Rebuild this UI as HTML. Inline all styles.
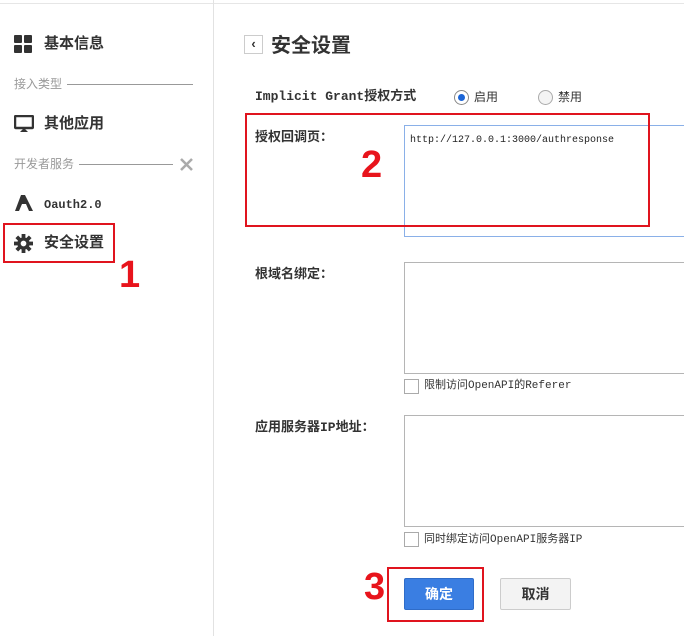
<!DOCTYPE html>
<html><head><meta charset="utf-8"><style>
*{margin:0;padding:0;box-sizing:border-box}
body{width:684px;height:636px;background:#fff;position:relative;overflow:hidden;font-family:"Liberation Sans","Noto Sans CJK SC",sans-serif;color:#333}
.a{position:absolute;white-space:nowrap}
.nav{font-size:15px;font-weight:bold;color:#333;line-height:20px}
.grp{font-size:12px;color:#999;line-height:16px}
.hl{position:absolute;height:1px;background:#999}
.lab{font-size:13px;font-weight:bold;color:#333;line-height:16px;font-family:"Liberation Mono","Noto Sans CJK SC",monospace}
.ta{position:absolute;left:404px;width:290px;height:112px;border:1px solid #b5b5b5}
.cb{position:absolute;left:404px;width:15px;height:15px;border:1px solid #aaa;background:#fff}
.ct{font-size:11px;color:#333;line-height:14px;font-family:"Liberation Mono","Noto Sans CJK SC",monospace}
.red{position:absolute;border:2px solid #e0141e}
.num{position:absolute;color:#e8141c;font-weight:bold;font-size:38px;line-height:38px;font-family:"Liberation Sans",sans-serif}
</style></head><body>
<div class="a" style="left:0;top:3px;width:684px;height:1px;background:#e6e6e6"></div>
<div class="a" style="left:213px;top:0;width:1px;height:636px;background:#e2e2e2"></div>

<svg class="a" style="left:14px;top:35px" width="18" height="18"><rect x="0" y="0" width="8" height="8" rx="1" fill="#333"/><rect x="10" y="0" width="8" height="8" rx="1" fill="#333"/><rect x="0" y="10" width="8" height="8" rx="1" fill="#333"/><rect x="10" y="10" width="8" height="8" rx="1" fill="#333"/></svg>
<div class="a nav" style="left:44px;top:34px">基本信息</div>
<div class="a grp" style="left:14px;top:76px">接入类型</div>
<div class="hl" style="left:67px;top:84px;width:126px"></div>
<svg class="a" style="left:14px;top:115px" width="20" height="18"><rect x="1" y="1" width="18" height="12" rx="1" fill="none" stroke="#333" stroke-width="2.5"/><path d="M6 17 L10 13 L14 17Z" fill="#333"/></svg>
<div class="a nav" style="left:44px;top:114px">其他应用</div>
<div class="a grp" style="left:14px;top:156px">开发者服务</div>
<div class="hl" style="left:79px;top:164px;width:94px"></div>
<svg class="a" style="left:179px;top:157px" width="15" height="15"><path d="M2 2 L13 13 M13 2 L2 13" stroke="#aaa" stroke-width="2.5"/></svg>
<svg class="a" style="left:14px;top:194px" width="20" height="18"><path d="M1 17 L7 1 H11 L19 17 H15 L12 10 H8 L5 17Z" fill="#333"/><rect x="7" y="8" width="6" height="2" fill="#333"/></svg>
<div class="a nav" style="left:44px;top:195px;font-size:12px;font-family:'Liberation Mono',monospace">Oauth2.0</div>
<svg class="a" style="left:14px;top:234px" width="19" height="19" viewBox="0 0 20 20"><g fill="#333"><circle cx="10" cy="10" r="6.5"/><rect x="8" y="0" width="4" height="20"/><rect x="0" y="8" width="20" height="4"/><rect x="8" y="0" width="4" height="20" transform="rotate(45 10 10)"/><rect x="8" y="0" width="4" height="20" transform="rotate(-45 10 10)"/></g><circle cx="10" cy="10" r="3" fill="#fff"/></svg>
<div class="a nav" style="left:44px;top:233px">安全设置</div>
<div class="red" style="left:3px;top:223px;width:112px;height:40px"></div>
<div class="num" style="left:119px;top:256px">1</div>

<div class="a" style="left:244px;top:35px;width:19px;height:19px;border:1px solid #ccc;font-size:13px;line-height:16px;text-align:center;font-weight:bold">‹</div>
<div class="a" style="left:271px;top:33px;font-size:20px;font-weight:bold;line-height:26px;color:#333">安全设置</div>

<div class="a lab" style="left:255px;top:89px">Implicit Grant授权方式</div>
<div class="a" style="left:454px;top:90px;width:15px;height:15px;border-radius:50%;border:1px solid #888;background:#fff"><div style="position:absolute;left:3px;top:3px;width:7px;height:7px;border-radius:50%;background:#1a64d6"></div></div>
<div class="a" style="left:474px;top:89px;font-size:12px;line-height:16px">启用</div>
<div class="a" style="left:538px;top:90px;width:15px;height:15px;border-radius:50%;border:1px solid #aaa;background:#f4f4f4"></div>
<div class="a" style="left:558px;top:89px;font-size:12px;line-height:16px">禁用</div>

<div class="a lab" style="left:255px;top:130px">授权回调页：</div>
<div class="ta" style="top:125px;border-color:#8ab0e8"></div>
<div class="a" style="left:410px;top:134px;font-size:10px;line-height:14px;font-family:'Liberation Mono',monospace;color:#222">http://127.0.0.1:3000/authresponse</div>
<div class="red" style="left:245px;top:113px;width:405px;height:114px"></div>
<div class="num" style="left:361px;top:146px">2</div>

<div class="a lab" style="left:255px;top:267px">根域名绑定：</div>
<div class="ta" style="top:262px"></div>
<div class="cb" style="top:379px"></div>
<div class="a ct" style="left:424px;top:379px">限制访问OpenAPI的Referer</div>

<div class="a lab" style="left:255px;top:420px">应用服务器IP地址：</div>
<div class="ta" style="top:415px"></div>
<div class="cb" style="top:532px"></div>
<div class="a ct" style="left:424px;top:533px">同时绑定访问OpenAPI服务器IP</div>

<div class="a" style="left:404px;top:578px;width:70px;height:32px;background:#3a7ee2;border:1px solid #2f6cc8;border-radius:2px;color:#fff;font-size:14px;font-weight:bold;line-height:30px;text-align:center">确定</div>
<div class="a" style="left:500px;top:578px;width:71px;height:32px;background:#f3f3f3;border:1px solid #ccc;border-radius:2px;color:#333;font-size:14px;font-weight:bold;line-height:30px;text-align:center">取消</div>
<div class="red" style="left:387px;top:567px;width:97px;height:55px"></div>
<div class="num" style="left:364px;top:568px">3</div>
</body></html>
